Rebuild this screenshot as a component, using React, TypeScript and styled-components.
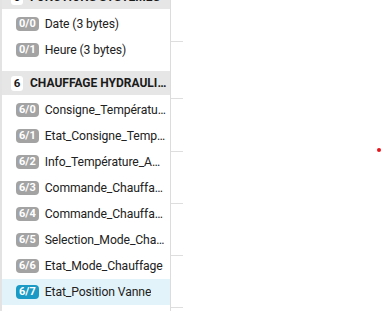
import React from 'react';
import styled, { createGlobalStyle } from 'styled-components';

const GlobalStyle = createGlobalStyle`
  html, body {
    margin: 0;
    padding: 0;
    background: #ffffff;
    overflow: hidden;
    font-family: Roboto, "Liberation Sans", sans-serif;
  }
`;

const groups = [
  {
    num: '0',
    title: 'Fonctions systèmes',
    items: [
      { addr: '0/0', name: 'Date (3 bytes)' },
      { addr: '0/1', name: 'Heure (3 bytes)' },
    ],
  },
  {
    num: '6',
    title: 'Chauffage hydraulique',
    items: [
      { addr: '6/0', name: 'Consigne_Température_Eau' },
      { addr: '6/1', name: 'Etat_Consigne_Température' },
      { addr: '6/2', name: 'Info_Température_Ambiante' },
      { addr: '6/3', name: 'Commande_Chauffage_Confort' },
      { addr: '6/4', name: 'Commande_Chauffage_Eco' },
      { addr: '6/5', name: 'Selection_Mode_Chauffage' },
      { addr: '6/6', name: 'Etat_Mode_Chauffage' },
      { addr: '6/7', name: 'Etat_Position Vanne', active: true },
    ],
  },
];

// row separators of the (empty) right-hand grid
const gridRows = [42, 57, 53, 52, 52, 52];

const Page = styled.div`
  display: flex;
  height: 311px;
  width: 382px;
  position: relative;
`;

const Sidebar = styled.aside`
  width: 168px;
  flex-shrink: 0;
  border-left: 2px solid #e3e3e3;
  border-right: 1px solid #dcdcdc;
  overflow: hidden;
  height: 311px;
`;

const List = styled.div`
  margin-top: -15px;
`;

const Group = styled.section`
  padding-bottom: 8px;
`;

const GroupHeader = styled.div`
  display: flex;
  align-items: center;
  gap: 7px;
  height: 24px;
  padding: 0 3px 0 9px;
  margin-bottom: 2px;
  background: #e6e6e6;
  color: #1a1a1a;
  font-size: 12px;
  font-weight: 700;
  text-transform: uppercase;
`;

const GroupNum = styled.span`
  flex-shrink: 0;
  min-width: 10px;
  height: 15px;
  line-height: 15px;
  padding: 0 1px;
  text-align: center;
  background: #ffffff;
  border-radius: 3px;
  font-size: 11.5px;
`;

const Ellipsis = styled.span`
  overflow: hidden;
  white-space: nowrap;
  text-overflow: ellipsis;
  min-width: 0;
`;

const Row = styled.div<{ $active?: boolean }>`
  display: flex;
  align-items: center;
  gap: 6px;
  height: 26px;
  padding: 0 3px 0 14px;
  background: ${(p) => (p.$active ? '#e2f3f9' : 'transparent')};
  color: #222;
  font-size: 12.2px;
  letter-spacing: -0.1px;
`;

const Addr = styled.span<{ $active?: boolean }>`
  flex-shrink: 0;
  padding: 0 3px;
  height: 14px;
  line-height: 14px;
  border-radius: 4px;
  background: ${(p) => (p.$active ? '#1a9ac4' : '#a3a3a3')};
  color: #fff;
  font-size: 11px;
  font-weight: 700;
  letter-spacing: 0;
`;

const Canvas = styled.div`
  flex: 1;
  display: flex;
  flex-direction: column;
`;

const GridRow = styled.div`
  width: 12px;
  flex-shrink: 0;
  border-bottom: 1px solid #dedede;
  box-sizing: border-box;
`;

const Marker = styled.span`
  position: absolute;
  left: 377px;
  top: 148px;
  width: 4px;
  height: 4px;
  border-radius: 50%;
  background: #e8141b;
`;

export default function App() {
  return (
    <>
      <GlobalStyle />
      <Page>
        <Sidebar>
          <List>
            {groups.map((g) => (
              <Group key={g.num}>
                <GroupHeader>
                  <GroupNum>{g.num}</GroupNum>
                  <Ellipsis>{g.title}</Ellipsis>
                </GroupHeader>
                {g.items.map((it) => (
                  <Row key={it.addr} $active={it.active}>
                    <Addr $active={it.active}>{it.addr}</Addr>
                    <Ellipsis>{it.name}</Ellipsis>
                  </Row>
                ))}
              </Group>
            ))}
          </List>
        </Sidebar>
        <Canvas>
          {gridRows.map((h, i) => (
            <GridRow key={i} style={{ height: h }} />
          ))}
        </Canvas>
        <Marker />
      </Page>
    </>
  );
}
